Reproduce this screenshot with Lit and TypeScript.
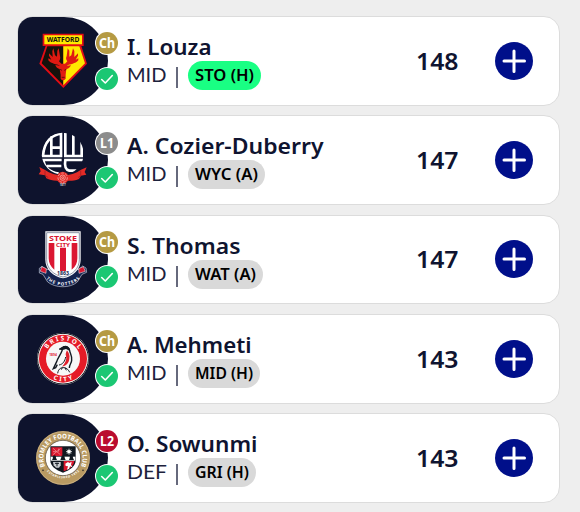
import { LitElement, html, css, svg } from "lit";
import { customElement, property } from "lit/decorators.js";

type League = "Ch" | "L1" | "L2";

interface Player {
  club: string;
  league: League;
  name: string;
  nameWidth: number;
  position: string;
  positionWidth: number;
  fixture: string;
  fixtureWidth: number;
  easy?: boolean;
  points: string;
}

const players: Player[] = [
  { club: "watford", league: "Ch", name: "I. Louza", nameWidth: 84.5, position: "MID", positionWidth: 39.5, fixture: "STO (H)", fixtureWidth: 59, easy: true, points: "148" },
  { club: "bolton", league: "L1", name: "A. Cozier-Duberry", nameWidth: 196.5, position: "MID", positionWidth: 39.5, fixture: "WYC (A)", fixtureWidth: 63, points: "147" },
  { club: "stoke", league: "Ch", name: "S. Thomas", nameWidth: 113.5, position: "MID", positionWidth: 39.5, fixture: "WAT (A)", fixtureWidth: 61, points: "147" },
  { club: "bristol", league: "Ch", name: "A. Mehmeti", nameWidth: 124.5, position: "MID", positionWidth: 39.5, fixture: "MID (H)", fixtureWidth: 58, points: "143" },
  { club: "bromley", league: "L2", name: "O. Sowunmi", nameWidth: 130.5, position: "DEF", positionWidth: 40, fixture: "GRI (H)", fixtureWidth: 54, points: "143" },
];

const watford = svg`
  <path d="M98 77H221V114H214L231 167L160 240L88 167L107 114H98Z" fill="#e30c14"/>
  <path d="M103 82H216V109H103Z" fill="#ffe900"/>
  <path d="M112 115H160V232L95 166Z" fill="#15120c"/>
  <path d="M160 115H208L225 166L160 232Z" fill="#ffe900"/>
  <text x="159" y="103" class="face" font-size="19" textLength="98" lengthAdjust="spacingAndGlyphs" fill="#15120c">WATFORD</text>
  <path d="M150 173C139 168 124 168 115 157V151L124 155L117 143V136L128 147L127 129L130 121L135 142L141 146L142 128L146 121L150 144C152 150 150 156 147 160L154 167H165L172 160C168 155 167 150 170 144L173 121L178 128V146L184 142L189 121L193 129V147L204 136V143L197 155L205 151V157C196 168 181 168 170 173L183 172C180 179 174 183 169 183L167 200V212L162 217H156L152 212V200L149 183C143 182 138 178 136 171Z" fill="#e01a12"/>
  <path d="M150 184L156 187M169 184L163 187M155 208H164" stroke="#631008" stroke-width="3"/>`;

const bolton = svg`
  <defs><clipPath id="ball"><circle cx="158" cy="137" r="63"/></clipPath></defs>
  <g clip-path="url(#ball)" fill="none" stroke="#fff" stroke-width="8">
    <path d="M153 70V144H92M124 84V144M124 119H153" />
    <path d="M155 77C126 79 102 101 99 144" />
    <path d="M166 70V144H215V92M190 80V144" />
    <path d="M94 156H155M100 156C103 180 119 193 146 197M110 174H154" />
    <path d="M219 156H166C163 174 166 185 178 188H200" />
  </g>
  <path d="M88 177L104 185C135 207 183 207 213 185L230 178L224 192L229 200L213 203L207 213C191 219 181 219 171 218H146C131 219 119 216 109 211L105 202L86 199L92 190Z" fill="#e32b27"/>
  <path d="M105 188V202L115 209M212 188V203L204 209" fill="none" stroke="#991b22" stroke-width="2"/>
  <circle cx="158" cy="209" r="18" fill="#e32b27"/>
  <g fill="none" stroke="#f7c9c4" stroke-width="2"><circle cx="158" cy="209" r="14" stroke-dasharray="8 4"/><circle cx="158" cy="209" r="8"/><circle cx="158" cy="209" r="3"/></g>
  <text x="158" y="234" class="face" font-size="8" fill="#d5d6de">1877</text>`;

const stoke = svg`
  <path d="M96 175L88 181V195L99 199L113 222C137 241 180 241 202 222L216 199L230 193L228 180L218 174L207 184H109Z" fill="#14234f" stroke="#c9cddb" stroke-width="2"/>
  <path d="M95 176L109 182L108 196L91 190ZM220 176L206 182L207 196L226 190Z" fill="#d91630" stroke="#fff" stroke-width="1.5"/>
  <path d="M106 70H212V155C212 185 189 205 159 211C129 205 106 185 106 155Z" fill="#fff"/>
  <path d="M110 74H208V155C208 182 187 201 159 207C131 201 110 182 110 155Z" fill="none" stroke="#283656" stroke-width="1.6"/>
  <path d="M116 105H133V185C122 176 116 165 116 151ZM150 119H168V189H150ZM185 105H202V151C202 165 197 176 185 185Z" fill="#db1732"/>
  <text x="159" y="99" class="face" font-size="23" textLength="84" lengthAdjust="spacingAndGlyphs" fill="#db1732">STOKE</text>
  <text x="159" y="116" class="face" font-size="14" textLength="42" lengthAdjust="spacingAndGlyphs" fill="#db1732">CITY</text>
  <text x="159" y="202" class="face" font-size="14" textLength="36" lengthAdjust="spacingAndGlyphs" fill="#14234f">1863</text>
  <path id="potters" d="M103 203C124 242 194 242 214 203" fill="none"/>
  <text class="face" font-size="13" fill="#fff"><textPath href="#potters" startOffset="50%" textLength="112">THE POTTERS</textPath></text>`;

const bristol = svg`
  <circle cx="159" cy="155" r="78" fill="#c9c4c0"/>
  <circle cx="159" cy="155" r="76" fill="none" stroke="#161b25" stroke-width="3"/>
  <circle cx="159" cy="155" r="74" fill="#fff"/>
  <circle cx="159" cy="155" r="72" fill="#e51b27"/>
  <circle cx="159" cy="155" r="51" fill="#f7f7f7"/>
  <path id="bristolTop" d="M104 155A55 55 0 0 1 214 155" fill="none"/>
  <path id="cityBottom" d="M91 155A68 68 0 0 0 227 155" fill="none"/>
  <text class="face" font-size="19" fill="#fff"><textPath href="#bristolTop" startOffset="50%" textLength="112">BRISTOL</textPath></text>
  <text class="face" font-size="19" fill="#fff"><textPath href="#cityBottom" startOffset="50%" textLength="62">CITY</textPath></text>
  <text x="129" y="146" class="face" font-size="10" fill="#df2630">1894</text>
  <path d="M171 130C177 138 180 145 178 155C177 168 168 176 156 179C167 167 171 157 168 147C166 141 168 137 171 130Z" fill="#df202c"/>
  <path d="M148 127L160 120C169 116 178 121 179 131C180 140 187 146 185 160C184 169 178 173 178 183M157 129C151 145 144 152 140 164L130 185L137 182L142 173" fill="none" stroke="#141b24" stroke-width="4.2"/>
  <path d="M147 127L160 118C170 115 180 120 180 132L168 126L156 130Z" fill="#141b24"/>
  <path d="M147 174C159 172 165 162 167 150M143 199C145 184 155 181 162 182C172 183 176 190 179 196M157 182L154 188M165 182L169 190" fill="none" stroke="#141b24" stroke-width="3"/>`;

const bromley = svg`
  <circle cx="159" cy="156" r="81" fill="#b99a62"/>
  <circle cx="159" cy="156" r="79" fill="none" stroke="#e9d8b5" stroke-width="1"/>
  <circle cx="159" cy="156" r="53" fill="#fff" stroke="#4a4032" stroke-width="2"/>
  <path id="bromleyTop" d="M107 184A59 59 0 1 1 211 184" fill="none"/>
  <path id="founded" d="M94 166A67 67 0 0 0 224 166" fill="none"/>
  <text class="face" font-size="19" fill="#fff"><textPath href="#bromleyTop" startOffset="50%" textLength="236" lengthAdjust="spacingAndGlyphs">BROMLEY FOOTBALL CLUB</textPath></text>
  <text class="face" font-size="9" fill="#fff"><textPath href="#founded" startOffset="50%" textLength="108">ESTABLISHED 1892</textPath></text>
  <circle cx="99" cy="193" r="2.5" fill="#2b2926"/><circle cx="219" cy="193" r="2.5" fill="#2b2926"/>
  <path d="M121 121H197V163C197 181 181 192 159 200C137 192 121 181 121 163Z" fill="#111821"/>
  <path d="M124 124H157V150H124ZM161 165H193C191 181 178 190 161 196Z" fill="#d9162d"/>
  <path d="M122 152H196V164H122Z" fill="#fff"/>
  <path d="M129 127L151 146M151 128L129 146M129 137H140M146 128V137" stroke="#f28b91" stroke-width="2.5"/>
  <path d="M177 128V146M168 137H186M171 131L183 143M183 131L171 143" stroke="#fff" stroke-width="2.5"/><circle cx="177" cy="137" r="5" fill="#fff"/>
  <path d="M126 162L130 154H137L141 162ZM151 162L154 154H163L167 162ZM177 162L180 154H188L192 162Z" fill="#111821"/>
  <circle cx="133" cy="153" r="5" fill="#111821"/><circle cx="159" cy="153" r="5" fill="#111821"/><circle cx="184" cy="153" r="5" fill="#111821"/>
  <path d="M129 168H152V178L147 185H138L131 178Z" fill="#c9ccd0"/><path d="M135 172H147M141 170V181" stroke="#111821" stroke-width="3"/>
  <path d="M166 173L174 168L178 171L185 167L183 176L188 184L180 181L177 189L171 191L174 181L167 180Z" fill="#fff"/>`;

const crests: Record<string, unknown> = { watford, bolton, stoke, bristol, bromley };

@customElement("club-crest")
export class ClubCrest extends LitElement {
  @property() club = "";
  static styles = css`
    :host { display: block; width: 90px; height: 88px; }
    svg { display: block; width: 90px; height: 88px; }
    .face { font-family: "Noto Sans", sans-serif; font-weight: 700; text-anchor: middle; }
  `;
  render() {
    const top = this.club === "watford" ? 27 : 24;
    return html`<svg viewBox="24 ${top} 270 264">${crests[this.club]}</svg>`;
  }
}

@customElement("player-card")
export class PlayerCard extends LitElement {
  @property({ attribute: false }) player!: Player;
  static styles = css`
    :host {
      display: flex;
      box-sizing: border-box;
      height: 89.7px;
      background: #fff;
      border: 1px solid #dcdcdc;
      border-radius: 16px;
      color: #0f1430;
      font-family: "Noto Sans", sans-serif;
    }
    .club { position: relative; flex: none; width: 90px; background: #0e132d; border-radius: 15px 45px 45px 15px; }
    .badges { position: absolute; left: 77px; top: 14.4px; display: grid; gap: 11.2px; }
    .badges svg { display: block; width: 24px; height: 24px; }
    .Ch { fill: #b59a43; }
    .L1 { fill: #8c8c8c; }
    .L2 { fill: #ba0c2f; }
    .league { font: 700 14px "Noto Sans", sans-serif; fill: #fff; text-anchor: middle; }
    .details { flex: 1; display: flex; flex-direction: column; padding: 17px 0 0 18.5px; }
    svg { display: block; flex: none; overflow: visible; }
    .name { font: 650 21px "Noto Sans", sans-serif; fill: #0f1430; }
    .meta { display: flex; align-items: center; height: 29px; }
    .position { font: 400 19.5px Lato, sans-serif; fill: #1d223c; }
    .bar { width: 2px; height: 21px; margin: 4px 10.2px 0 9.8px; background: #66697c; }
    .pill { display: flex; align-items: center; height: 29px; padding: 0 7px; border-radius: 15px; background: #d9d9d9; }
    .pill.easy { background: #19ff83; }
    .fixture { font: 650 16.5px "Noto Sans", sans-serif; fill: #000; }
    .points { font: 650 24px "Noto Sans", sans-serif; fill: #0f1430; }
    .actions { display: flex; align-items: center; gap: 36.5px; padding-right: 26.5px; }
    .add { width: 38px; height: 38px; padding: 0; border: 0; background: none; }
  `;

  private label(text: string, kind: string, width: number, height: number, baseline: number) {
    return html`<svg width=${width} height=${height}>
      <text class=${kind} x="0" y=${baseline} textLength=${width} lengthAdjust="spacingAndGlyphs">${text}</text>
    </svg>`;
  }

  render() {
    const p = this.player;
    return html`
      <div class="club">
        <club-crest club=${p.club}></club-crest>
        <div class="badges">
          <svg viewBox="0 0 24 24">
            <circle cx="12" cy="12" r="12" fill="#fff"/><circle class=${p.league} cx="12" cy="12" r="11"/>
            <text class="league" x="12" y="16.8" textLength=${p.league === "Ch" ? 16 : 14} lengthAdjust="spacingAndGlyphs">${p.league}</text>
          </svg>
          <svg viewBox="0 0 24 24">
            <circle cx="12" cy="12" r="12" fill="#fff"/><circle cx="12" cy="12" r="11" fill="#1bc773"/>
            <path d="M6.7 12.5L10.3 16L17.3 8.5" fill="none" stroke="#fff" stroke-width="1.6" stroke-linecap="round" stroke-linejoin="round"/>
          </svg>
        </div>
      </div>
      <div class="details">
        ${this.label(p.name, "name", p.nameWidth, 27, 21)}
        <div class="meta">
          ${this.label(p.position, "position", p.positionWidth, 29, 21.4)}
          <div class="bar"></div>
          <div class="pill ${p.easy ? "easy" : ""}">${this.label(p.fixture, "fixture", p.fixtureWidth, 29, 20)}</div>
        </div>
      </div>
      <div class="actions">
        ${this.label(p.points, "points", 42.5, 34, 26.4)}
        <button class="add" aria-label="Add player">
          <svg width="38" height="38"><circle cx="19" cy="19" r="19" fill="#000f8a"/><path d="M19 9V29.5M9 19H29.5" stroke="#fff" stroke-width="3" stroke-linecap="round"/></svg>
        </button>
      </div>`;
  }
}

@customElement("app-root")
export class AppRoot extends LitElement {
  static styles = css`
    :host { display: block; box-sizing: border-box; height: 512px; padding: 16px 20px 0 17px; background: #eee; overflow: hidden; }
    .list { display: grid; gap: 9.6px; }
  `;
  render() {
    return html`<div class="list">${players.map((p) => html`<player-card .player=${p}></player-card>`)}</div>`;
  }
}
